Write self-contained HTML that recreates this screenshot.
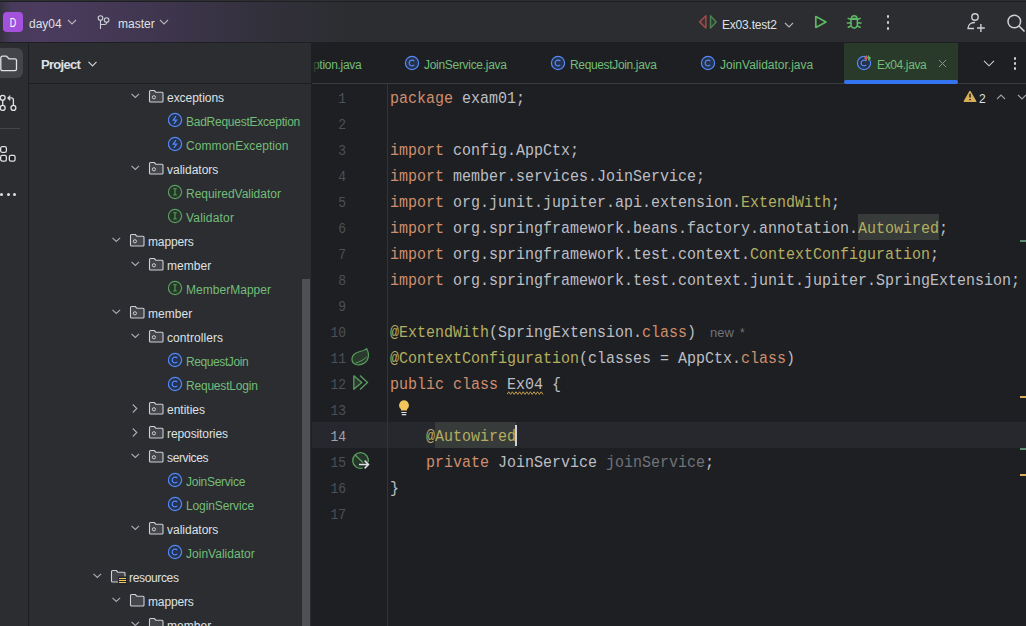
<!DOCTYPE html>
<html><head><meta charset="utf-8">
<style>
*{margin:0;padding:0;box-sizing:border-box}
html,body{width:1026px;height:626px;overflow:hidden;background:#1E1F22}
body{position:relative;font-family:"Liberation Sans",sans-serif;color:#DFE1E5}
.a{position:absolute}
#top{left:0;top:0;width:1026px;height:2px;background:linear-gradient(180deg,#2D2F33 0,#2D2F33 1px,#1E1F22 1px,#1E1F22 2px)}
#tb{left:0;top:2px;width:1026px;height:40px;background:#2B2D30}
#tbg{left:0;top:2px;width:1026px;height:40px;background:linear-gradient(90deg,rgba(120,80,160,0.12) 0px,rgba(120,80,160,0.38) 11px,rgba(120,80,160,0.42) 40px,rgba(112,76,152,0.32) 140px,rgba(95,68,128,0.15) 260px,rgba(43,45,48,0) 350px)}
#tbline{left:0;top:42px;width:1026px;height:1px;background:#1E1F22}
#strip{left:0;top:43px;width:28px;height:583px;background:#2B2D30}
#stripb{left:28px;top:43px;width:1px;height:583px;background:#1E1F22}
#proj{left:29px;top:43px;width:282px;height:583px;background:#2B2D30}
#projb{left:29px;top:83px;width:282px;height:1px;background:#1E1F22}
#projr{left:311px;top:43px;width:1px;height:583px;background:#1E1F22}
.ui{font-size:12px;color:#DFE1E5;white-space:pre;line-height:16px}
.t{position:absolute;font-size:12px;white-space:pre;line-height:16px;color:#DFE1E5}
.g{color:#73BD79}
.code{position:absolute;left:390px;font-family:"Liberation Mono",monospace;font-size:15px;line-height:26px;height:26px;white-space:pre;color:#BCBEC4;transform:translateY(3px) scaleY(1.1)}
.ln{position:absolute;left:312px;width:34px;text-align:right;font-family:"Liberation Mono",monospace;font-size:13px;line-height:26px;height:26px;color:#4B5059;transform:translateY(2.5px) scaleY(1.1)}
.k{color:#CF8E6D}
.an{color:#B3AE60}
.gr{color:#6F737A}
</style></head><body>
<div class="a" id="top"></div>
<div class="a" id="tb"></div>
<div class="a" id="tbg"></div>
<div class="a" id="tbline"></div>

<!-- title bar content -->
<div class="a" style="left:3px;top:12px;width:20px;height:20px;border-radius:4px;background:#A451DE"></div>
<div class="t" style="left:3px;top:15px;width:20px;text-align:center;font-size:12px;color:#fff;transform:scaleX(0.75)">D</div>
<div class="t" style="left:29px;top:16px;font-size:12px">day04</div>
<svg class="a" style="left:67px;top:19px" width="10" height="6" viewBox="0 0 10 6"><path d="M1 1L5 5L9 1" stroke="#B4B6BC" stroke-width="1.1" fill="none"/></svg>
<svg class="a" style="left:96px;top:14px" width="14" height="18" viewBox="0 0 14 18"><circle cx="4.5" cy="4" r="2.3" stroke="#CED0D6" stroke-width="1.1" fill="none"/><circle cx="10.6" cy="6" r="2.3" stroke="#CED0D6" stroke-width="1.1" fill="none"/><path d="M4.5 6.3V15M10.6 8.3V9C10.6 10.5 10 10.5 8.5 10.5H4.5" stroke="#CED0D6" stroke-width="1.1" fill="none"/></svg>
<div class="t" style="left:118px;top:16px">master</div>
<svg class="a" style="left:159px;top:19px" width="10" height="6" viewBox="0 0 10 6"><path d="M1 1L5 5L9 1" stroke="#B4B6BC" stroke-width="1.1" fill="none"/></svg>

<!-- right toolbar -->
<svg class="a" style="left:694px;top:10px" width="26" height="24" viewBox="0 0 26 24"><path d="M5.6 11.9L11.9 5.8V18Z" fill="#3D2F31" stroke="#9E4C4C" stroke-width="1.5" stroke-linejoin="round"/><path d="M16.5 5.8L22.2 11.9L16.5 18Z" fill="#2F3D31" stroke="#4C8050" stroke-width="1.5" stroke-linejoin="round"/></svg>
<div class="t" style="left:722px;top:17px;letter-spacing:-0.2px">Ex03.test2</div>
<svg class="a" style="left:784px;top:22px" width="10" height="6" viewBox="0 0 10 6"><path d="M1 1L5 5L9 1" stroke="#B4B6BC" stroke-width="1.1" fill="none"/></svg>
<svg class="a" style="left:806px;top:10px" width="26" height="24" viewBox="0 0 26 24"><path d="M9.8 6.5L20 11.9L9.8 17.4Z" fill="none" stroke="#5FB865" stroke-width="1.7" stroke-linejoin="round"/></svg>
<svg class="a" style="left:845px;top:12px" width="18" height="18" viewBox="0 0 18 18"><path d="M6.4 6.6A2.8 2.8 0 0 1 12 6.6Z" fill="none" stroke="#5FB865" stroke-width="1.5" stroke-linejoin="round"/><path d="M6 7.2H12.4V12.6A3.2 3.5 0 0 1 6 12.6Z" fill="none" stroke="#5FB865" stroke-width="1.5"/><path d="M3.2 6.4L6 7.5M2.4 11H6M3.2 15.3L6 14M15.2 6.4L12.4 7.5M16 11H12.4M15.2 15.3L12.4 14" stroke="#5FB865" stroke-width="1.5" stroke-linecap="round"/></svg>
<div class="a" style="left:886.5px;top:15px;width:2.8px;height:2.8px;border-radius:2px;background:#CED0D6"></div>
<div class="a" style="left:886.5px;top:21px;width:2.8px;height:2.8px;border-radius:2px;background:#CED0D6"></div>
<div class="a" style="left:886.5px;top:27px;width:2.8px;height:2.8px;border-radius:2px;background:#CED0D6"></div>
<svg class="a" style="left:966px;top:12px" width="20" height="20" viewBox="0 0 20 20"><circle cx="9" cy="5" r="3.2" fill="none" stroke="#CED0D6" stroke-width="1.4"/><path d="M2 16.5C2 12 6 10.5 9 10.5" fill="none" stroke="#CED0D6" stroke-width="1.4"/><path d="M1.5 16.5H8M14.9 12V20M11 16H18.8" stroke="#CED0D6" stroke-width="1.4"/></svg>
<svg class="a" style="left:1006.7px;top:13.5px" width="20" height="19" viewBox="0 0 20 19"><circle cx="7.3" cy="7.5" r="6.3" fill="none" stroke="#CED0D6" stroke-width="1.5"/><path d="M12 12L17.5 17.5" stroke="#CED0D6" stroke-width="1.6"/></svg>

<!-- left strip -->
<div class="a" id="strip"></div>
<div class="a" id="stripb"></div>
<div class="a" style="left:-6px;top:48px;width:29px;height:30px;border-radius:6px;background:#43454A"></div>
<svg class="a" style="left:0;top:55px" width="18" height="17" viewBox="0 0 18 17"><path d="M0.8 3Q0.8 1.2 2.5 1.2H6.5L9 3.8H15Q16.5 3.8 16.5 5.3V14Q16.5 15.6 15 15.6H2.5Q0.8 15.6 0.8 14Z" fill="none" stroke="#DFE1E5" stroke-width="1.3" stroke-linejoin="round"/></svg>
<svg class="a" style="left:0;top:88px" width="18" height="24" viewBox="0 0 18 24"><circle cx="2.7" cy="9.8" r="2.45" fill="none" stroke="#DFE1E5" stroke-width="1.3"/><circle cx="2.7" cy="19.9" r="2.45" fill="none" stroke="#DFE1E5" stroke-width="1.3"/><circle cx="13.4" cy="19.9" r="2.45" fill="none" stroke="#DFE1E5" stroke-width="1.3"/><path d="M2.7 12.3V17.4M13.4 17.4V12Q13.4 9.9 11.3 9.9H8.2M10.3 7.6L8 9.9L10.3 12.2" fill="none" stroke="#DFE1E5" stroke-width="1.3"/></svg>
<div class="a" style="left:0;top:128px;width:20px;height:1px;background:#43454A"></div>
<svg class="a" style="left:0;top:145px" width="18" height="18" viewBox="0 0 18 18"><rect x="0.65" y="1.65" width="5.7" height="5.7" rx="1.6" fill="#1F2023" stroke="#DFE1E5" stroke-width="1.3"/><rect x="0.65" y="10.35" width="5.7" height="5.7" rx="1.6" fill="#1F2023" stroke="#DFE1E5" stroke-width="1.3"/><rect x="9.35" y="10.35" width="5.7" height="5.7" rx="1.6" fill="#1F2023" stroke="#DFE1E5" stroke-width="1.3"/></svg>
<div class="a" style="left:0;top:192.5px;width:3px;height:3px;border-radius:2px;background:#DFE1E5"></div>
<div class="a" style="left:6.5px;top:192.5px;width:3px;height:3px;border-radius:2px;background:#DFE1E5"></div>
<div class="a" style="left:13px;top:192.5px;width:3px;height:3px;border-radius:2px;background:#DFE1E5"></div>

<!-- project panel -->
<div class="a" id="proj"></div>
<div class="a" id="projb"></div>
<div class="a" id="projr"></div>
<div class="t" style="left:41px;top:57px;font-size:13px;font-weight:bold;letter-spacing:-0.7px">Project</div>
<svg class="a" style="left:88px;top:61px" width="9" height="6" viewBox="0 0 9 6"><path d="M0.5 0.8L4.5 4.8L8.5 0.8" stroke="#CED0D6" stroke-width="1.2" fill="none"/></svg>
<svg class="a" style="left:131px;top:93px" width="9" height="6" viewBox="0 0 9 6"><path d="M0.5 0.8L4.3 4.5L8.1 0.8" stroke="#A8ADBD" stroke-width="1.1" fill="none"/></svg>
<svg class="a" style="left:148px;top:89px" width="17" height="16" viewBox="0 0 17 16"><path d="M1.5 2.5Q1.5 1.5 2.5 1.5H6.3L8 3.3H14Q15 3.3 15 4.3V12Q15 13 14 13H2.5Q1.5 13 1.5 12Z" fill="#43454A" stroke="#CED0D6" stroke-width="1.1" stroke-linejoin="round"/><circle cx="5.9" cy="8.3" r="1.6" fill="none" stroke="#CED0D6" stroke-width="1"/></svg>
<div class="t" style="left:167px;top:90px;color:#DFE1E5;letter-spacing:-0.038px">exceptions</div>
<svg class="a" style="left:167px;top:112px" width="16" height="16" viewBox="0 0 16 16"><circle cx="8" cy="8" r="6.6" fill="#25324D" stroke="#548AF7" stroke-width="1.2"/><path d="M9 4.2L6.2 8.2H9.6L6.9 11.8" fill="none" stroke="#548AF7" stroke-width="1.2"/></svg>
<div class="t" style="left:186px;top:114px;color:#73BD79;letter-spacing:-0.250px">BadRequestException</div>
<svg class="a" style="left:167px;top:136px" width="16" height="16" viewBox="0 0 16 16"><circle cx="8" cy="8" r="6.6" fill="#25324D" stroke="#548AF7" stroke-width="1.2"/><path d="M9 4.2L6.2 8.2H9.6L6.9 11.8" fill="none" stroke="#548AF7" stroke-width="1.2"/></svg>
<div class="t" style="left:186px;top:138px;color:#73BD79;letter-spacing:0.081px">CommonException</div>
<svg class="a" style="left:131px;top:165px" width="9" height="6" viewBox="0 0 9 6"><path d="M0.5 0.8L4.3 4.5L8.1 0.8" stroke="#A8ADBD" stroke-width="1.1" fill="none"/></svg>
<svg class="a" style="left:148px;top:161px" width="17" height="16" viewBox="0 0 17 16"><path d="M1.5 2.5Q1.5 1.5 2.5 1.5H6.3L8 3.3H14Q15 3.3 15 4.3V12Q15 13 14 13H2.5Q1.5 13 1.5 12Z" fill="#43454A" stroke="#CED0D6" stroke-width="1.1" stroke-linejoin="round"/><circle cx="5.9" cy="8.3" r="1.6" fill="none" stroke="#CED0D6" stroke-width="1"/></svg>
<div class="t" style="left:167px;top:162px;color:#DFE1E5;letter-spacing:-0.006px">validators</div>
<svg class="a" style="left:167px;top:184px" width="16" height="16" viewBox="0 0 16 16"><circle cx="8" cy="8" r="6.6" fill="#253627" stroke="#5AA062" stroke-width="1.2"/><path d="M6.2 4.6H9.8M6.2 10.9H9.8M8 4.6V10.9" fill="none" stroke="#4F8A56" stroke-width="1.4"/></svg>
<div class="t" style="left:186px;top:186px;color:#73BD79;letter-spacing:-0.016px">RequiredValidator</div>
<svg class="a" style="left:167px;top:208px" width="16" height="16" viewBox="0 0 16 16"><circle cx="8" cy="8" r="6.6" fill="#253627" stroke="#5AA062" stroke-width="1.2"/><path d="M6.2 4.6H9.8M6.2 10.9H9.8M8 4.6V10.9" fill="none" stroke="#4F8A56" stroke-width="1.4"/></svg>
<div class="t" style="left:186px;top:210px;color:#73BD79;letter-spacing:0.180px">Validator</div>
<svg class="a" style="left:112px;top:237px" width="9" height="6" viewBox="0 0 9 6"><path d="M0.5 0.8L4.3 4.5L8.1 0.8" stroke="#A8ADBD" stroke-width="1.1" fill="none"/></svg>
<svg class="a" style="left:129px;top:233px" width="17" height="16" viewBox="0 0 17 16"><path d="M1.5 2.5Q1.5 1.5 2.5 1.5H6.3L8 3.3H14Q15 3.3 15 4.3V12Q15 13 14 13H2.5Q1.5 13 1.5 12Z" fill="#43454A" stroke="#CED0D6" stroke-width="1.1" stroke-linejoin="round"/><circle cx="5.9" cy="8.3" r="1.6" fill="none" stroke="#CED0D6" stroke-width="1"/></svg>
<div class="t" style="left:148px;top:234px;color:#DFE1E5;letter-spacing:-0.141px">mappers</div>
<svg class="a" style="left:131px;top:261px" width="9" height="6" viewBox="0 0 9 6"><path d="M0.5 0.8L4.3 4.5L8.1 0.8" stroke="#A8ADBD" stroke-width="1.1" fill="none"/></svg>
<svg class="a" style="left:148px;top:257px" width="17" height="16" viewBox="0 0 17 16"><path d="M1.5 2.5Q1.5 1.5 2.5 1.5H6.3L8 3.3H14Q15 3.3 15 4.3V12Q15 13 14 13H2.5Q1.5 13 1.5 12Z" fill="#43454A" stroke="#CED0D6" stroke-width="1.1" stroke-linejoin="round"/><circle cx="5.9" cy="8.3" r="1.6" fill="none" stroke="#CED0D6" stroke-width="1"/></svg>
<div class="t" style="left:167px;top:258px;color:#DFE1E5;letter-spacing:0.063px">member</div>
<svg class="a" style="left:167px;top:280px" width="16" height="16" viewBox="0 0 16 16"><circle cx="8" cy="8" r="6.6" fill="#253627" stroke="#5AA062" stroke-width="1.2"/><path d="M6.2 4.6H9.8M6.2 10.9H9.8M8 4.6V10.9" fill="none" stroke="#4F8A56" stroke-width="1.4"/></svg>
<div class="t" style="left:186px;top:282px;color:#73BD79;letter-spacing:0.025px">MemberMapper</div>
<svg class="a" style="left:112px;top:309px" width="9" height="6" viewBox="0 0 9 6"><path d="M0.5 0.8L4.3 4.5L8.1 0.8" stroke="#A8ADBD" stroke-width="1.1" fill="none"/></svg>
<svg class="a" style="left:129px;top:305px" width="17" height="16" viewBox="0 0 17 16"><path d="M1.5 2.5Q1.5 1.5 2.5 1.5H6.3L8 3.3H14Q15 3.3 15 4.3V12Q15 13 14 13H2.5Q1.5 13 1.5 12Z" fill="#43454A" stroke="#CED0D6" stroke-width="1.1" stroke-linejoin="round"/><circle cx="5.9" cy="8.3" r="1.6" fill="none" stroke="#CED0D6" stroke-width="1"/></svg>
<div class="t" style="left:148px;top:306px;color:#DFE1E5;letter-spacing:0.063px">member</div>
<svg class="a" style="left:131px;top:333px" width="9" height="6" viewBox="0 0 9 6"><path d="M0.5 0.8L4.3 4.5L8.1 0.8" stroke="#A8ADBD" stroke-width="1.1" fill="none"/></svg>
<svg class="a" style="left:148px;top:329px" width="17" height="16" viewBox="0 0 17 16"><path d="M1.5 2.5Q1.5 1.5 2.5 1.5H6.3L8 3.3H14Q15 3.3 15 4.3V12Q15 13 14 13H2.5Q1.5 13 1.5 12Z" fill="#43454A" stroke="#CED0D6" stroke-width="1.1" stroke-linejoin="round"/><circle cx="5.9" cy="8.3" r="1.6" fill="none" stroke="#CED0D6" stroke-width="1"/></svg>
<div class="t" style="left:167px;top:330px;color:#DFE1E5;letter-spacing:0.076px">controllers</div>
<svg class="a" style="left:167px;top:352px" width="16" height="16" viewBox="0 0 16 16"><circle cx="8" cy="8" r="6.6" fill="#25324D" stroke="#548AF7" stroke-width="1.2"/><path d="M10.25 6.1A2.9 2.9 0 1 0 10.25 9.9" fill="none" stroke="#548AF7" stroke-width="1.25"/></svg>
<div class="t" style="left:186px;top:354px;color:#73BD79;letter-spacing:-0.411px">RequestJoin</div>
<svg class="a" style="left:167px;top:376px" width="16" height="16" viewBox="0 0 16 16"><circle cx="8" cy="8" r="6.6" fill="#25324D" stroke="#548AF7" stroke-width="1.2"/><path d="M10.25 6.1A2.9 2.9 0 1 0 10.25 9.9" fill="none" stroke="#548AF7" stroke-width="1.25"/></svg>
<div class="t" style="left:186px;top:378px;color:#73BD79;letter-spacing:-0.205px">RequestLogin</div>
<svg class="a" style="left:132px;top:404px" width="6" height="9" viewBox="0 0 6 9"><path d="M0.8 0.5L4.8 4.5L0.8 8.5" stroke="#A8ADBD" stroke-width="1.1" fill="none"/></svg>
<svg class="a" style="left:148px;top:401px" width="17" height="16" viewBox="0 0 17 16"><path d="M1.5 2.5Q1.5 1.5 2.5 1.5H6.3L8 3.3H14Q15 3.3 15 4.3V12Q15 13 14 13H2.5Q1.5 13 1.5 12Z" fill="#43454A" stroke="#CED0D6" stroke-width="1.1" stroke-linejoin="round"/><circle cx="5.9" cy="8.3" r="1.6" fill="none" stroke="#CED0D6" stroke-width="1"/></svg>
<div class="t" style="left:167px;top:402px;color:#DFE1E5;letter-spacing:-0.004px">entities</div>
<svg class="a" style="left:132px;top:428px" width="6" height="9" viewBox="0 0 6 9"><path d="M0.8 0.5L4.8 4.5L0.8 8.5" stroke="#A8ADBD" stroke-width="1.1" fill="none"/></svg>
<svg class="a" style="left:148px;top:425px" width="17" height="16" viewBox="0 0 17 16"><path d="M1.5 2.5Q1.5 1.5 2.5 1.5H6.3L8 3.3H14Q15 3.3 15 4.3V12Q15 13 14 13H2.5Q1.5 13 1.5 12Z" fill="#43454A" stroke="#CED0D6" stroke-width="1.1" stroke-linejoin="round"/><circle cx="5.9" cy="8.3" r="1.6" fill="none" stroke="#CED0D6" stroke-width="1"/></svg>
<div class="t" style="left:167px;top:426px;color:#DFE1E5;letter-spacing:-0.094px">repositories</div>
<svg class="a" style="left:131px;top:453px" width="9" height="6" viewBox="0 0 9 6"><path d="M0.5 0.8L4.3 4.5L8.1 0.8" stroke="#A8ADBD" stroke-width="1.1" fill="none"/></svg>
<svg class="a" style="left:148px;top:449px" width="17" height="16" viewBox="0 0 17 16"><path d="M1.5 2.5Q1.5 1.5 2.5 1.5H6.3L8 3.3H14Q15 3.3 15 4.3V12Q15 13 14 13H2.5Q1.5 13 1.5 12Z" fill="#43454A" stroke="#CED0D6" stroke-width="1.1" stroke-linejoin="round"/><circle cx="5.9" cy="8.3" r="1.6" fill="none" stroke="#CED0D6" stroke-width="1"/></svg>
<div class="t" style="left:167px;top:450px;color:#DFE1E5;letter-spacing:-0.365px">services</div>
<svg class="a" style="left:167px;top:472px" width="16" height="16" viewBox="0 0 16 16"><circle cx="8" cy="8" r="6.6" fill="#25324D" stroke="#548AF7" stroke-width="1.2"/><path d="M10.25 6.1A2.9 2.9 0 1 0 10.25 9.9" fill="none" stroke="#548AF7" stroke-width="1.25"/></svg>
<div class="t" style="left:186px;top:474px;color:#73BD79;letter-spacing:-0.266px">JoinService</div>
<svg class="a" style="left:167px;top:496px" width="16" height="16" viewBox="0 0 16 16"><circle cx="8" cy="8" r="6.6" fill="#25324D" stroke="#548AF7" stroke-width="1.2"/><path d="M10.25 6.1A2.9 2.9 0 1 0 10.25 9.9" fill="none" stroke="#548AF7" stroke-width="1.25"/></svg>
<div class="t" style="left:186px;top:498px;color:#73BD79;letter-spacing:-0.115px">LoginService</div>
<svg class="a" style="left:131px;top:525px" width="9" height="6" viewBox="0 0 9 6"><path d="M0.5 0.8L4.3 4.5L8.1 0.8" stroke="#A8ADBD" stroke-width="1.1" fill="none"/></svg>
<svg class="a" style="left:148px;top:521px" width="17" height="16" viewBox="0 0 17 16"><path d="M1.5 2.5Q1.5 1.5 2.5 1.5H6.3L8 3.3H14Q15 3.3 15 4.3V12Q15 13 14 13H2.5Q1.5 13 1.5 12Z" fill="#43454A" stroke="#CED0D6" stroke-width="1.1" stroke-linejoin="round"/><circle cx="5.9" cy="8.3" r="1.6" fill="none" stroke="#CED0D6" stroke-width="1"/></svg>
<div class="t" style="left:167px;top:522px;color:#DFE1E5;letter-spacing:-0.006px">validators</div>
<svg class="a" style="left:167px;top:544px" width="16" height="16" viewBox="0 0 16 16"><circle cx="8" cy="8" r="6.6" fill="#25324D" stroke="#548AF7" stroke-width="1.2"/><path d="M10.25 6.1A2.9 2.9 0 1 0 10.25 9.9" fill="none" stroke="#548AF7" stroke-width="1.25"/></svg>
<div class="t" style="left:186px;top:546px;color:#73BD79;letter-spacing:0.017px">JoinValidator</div>
<svg class="a" style="left:93px;top:573px" width="9" height="6" viewBox="0 0 9 6"><path d="M0.5 0.8L4.3 4.5L8.1 0.8" stroke="#A8ADBD" stroke-width="1.1" fill="none"/></svg>
<svg class="a" style="left:110px;top:569px" width="17" height="16" viewBox="0 0 17 16"><path d="M1.5 2.5Q1.5 1.5 2.5 1.5H6.3L8 3.3H14Q15 3.3 15 4.3V12Q15 13 14 13H2.5Q1.5 13 1.5 12Z" fill="#43454A" stroke="#CED0D6" stroke-width="1.1" stroke-linejoin="round"/><rect x="8" y="7.5" width="9" height="8.5" fill="#25272A"/><path d="M9 9.5H16M9 11.5H16M9 13.5H16" stroke="#F0C45E" stroke-width="1"/></svg>
<div class="t" style="left:129px;top:570px;color:#DFE1E5;letter-spacing:-0.343px">resources</div>
<svg class="a" style="left:112px;top:597px" width="9" height="6" viewBox="0 0 9 6"><path d="M0.5 0.8L4.3 4.5L8.1 0.8" stroke="#A8ADBD" stroke-width="1.1" fill="none"/></svg>
<svg class="a" style="left:129px;top:593px" width="17" height="16" viewBox="0 0 17 16"><path d="M1.5 2.5Q1.5 1.5 2.5 1.5H6.3L8 3.3H14Q15 3.3 15 4.3V12Q15 13 14 13H2.5Q1.5 13 1.5 12Z" fill="#43454A" stroke="#CED0D6" stroke-width="1.1" stroke-linejoin="round"/></svg>
<div class="t" style="left:148px;top:594px;color:#DFE1E5;letter-spacing:-0.141px">mappers</div>
<svg class="a" style="left:131px;top:621px" width="9" height="6" viewBox="0 0 9 6"><path d="M0.5 0.8L4.3 4.5L8.1 0.8" stroke="#A8ADBD" stroke-width="1.1" fill="none"/></svg>
<svg class="a" style="left:148px;top:617px" width="17" height="16" viewBox="0 0 17 16"><path d="M1.5 2.5Q1.5 1.5 2.5 1.5H6.3L8 3.3H14Q15 3.3 15 4.3V12Q15 13 14 13H2.5Q1.5 13 1.5 12Z" fill="#43454A" stroke="#CED0D6" stroke-width="1.1" stroke-linejoin="round"/></svg>
<div class="t" style="left:167px;top:618px;color:#DFE1E5;letter-spacing:0.063px">member</div>
<div class="a" style="left:302px;top:279px;width:8px;height:347px;background:#4E5055"></div>

<!-- editor -->
<div class="a" style="left:312px;top:43px;width:714px;height:40px;background:#1E1F22"></div>
<div class="a" style="left:312px;top:83px;width:714px;height:1px;background:#393B40"></div>
<div class="a" style="left:844px;top:43px;width:114px;height:40px;background:#293A2B"></div>
<div class="a" style="left:844px;top:80px;width:114px;height:4px;border-radius:2px;background:#3574F0"></div>
<div class="t" style="left:313px;top:57px;color:#73BD79;letter-spacing:-0.3px">ption.java</div>
<div class="t" style="left:424px;top:57px;color:#73BD79;letter-spacing:-0.3px">JoinService.java</div>
<svg class="a" style="left:404px;top:55px" width="16" height="16" viewBox="0 0 16 16"><circle cx="8" cy="8" r="6.6" fill="#25324D" stroke="#548AF7" stroke-width="1.2"/><path d="M10.25 6.1A2.9 2.9 0 1 0 10.25 9.9" fill="none" stroke="#548AF7" stroke-width="1.25"/></svg>
<div class="t" style="left:570px;top:57px;color:#73BD79;letter-spacing:-0.35px">RequestJoin.java</div>
<svg class="a" style="left:550px;top:55px" width="16" height="16" viewBox="0 0 16 16"><circle cx="8" cy="8" r="6.6" fill="#25324D" stroke="#548AF7" stroke-width="1.2"/><path d="M10.25 6.1A2.9 2.9 0 1 0 10.25 9.9" fill="none" stroke="#548AF7" stroke-width="1.25"/></svg>
<div class="t" style="left:720px;top:57px;color:#73BD79;letter-spacing:0.0px">JoinValidator.java</div>
<svg class="a" style="left:700px;top:55px" width="16" height="16" viewBox="0 0 16 16"><circle cx="8" cy="8" r="6.6" fill="#25324D" stroke="#548AF7" stroke-width="1.2"/><path d="M10.25 6.1A2.9 2.9 0 1 0 10.25 9.9" fill="none" stroke="#548AF7" stroke-width="1.25"/></svg>
<div class="t" style="left:877px;top:57px;color:#73BD79;letter-spacing:-0.37px">Ex04.java</div>
<svg class="a" style="left:856px;top:55px" width="16" height="16" viewBox="0 0 16 16"><circle cx="8" cy="8" r="6.6" fill="#25324D" stroke="#548AF7" stroke-width="1.2"/><path d="M10.25 6.1A2.9 2.9 0 1 0 10.25 9.9" fill="none" stroke="#548AF7" stroke-width="1.25"/></svg>
<div class="a" style="left:311px;top:43px;width:1px;height:40px;background:#1E1F22"></div>
<div class="a" style="left:312px;top:50px;width:9px;height:26px;background:linear-gradient(90deg,rgba(30,31,34,1),rgba(30,31,34,0.6) 50%,rgba(30,31,34,0))"></div>
<svg class="a" style="left:863px;top:54px" width="10" height="8" viewBox="0 0 10 8"><path d="M1 4L4 1V7Z" fill="#DB5C5C"/><path d="M5 1L8 4L5 7Z" fill="#5FB865"/></svg>
<svg class="a" style="left:938px;top:58.5px" width="9" height="9" viewBox="0 0 9 9"><path d="M1 1L8 8M8 1L1 8" stroke="#8C8F96" stroke-width="1"/></svg>
<svg class="a" style="left:983px;top:60px" width="12" height="7" viewBox="0 0 12 7"><path d="M1 0.8L6 5.8L11 0.8" stroke="#CED0D6" stroke-width="1.1" fill="none"/></svg>
<div class="a" style="left:1013.5px;top:57px;width:2.5px;height:2.5px;border-radius:2px;background:#CED0D6"></div>
<div class="a" style="left:1013.5px;top:62px;width:2.5px;height:2.5px;border-radius:2px;background:#CED0D6"></div>
<div class="a" style="left:1013.5px;top:67px;width:2.5px;height:2.5px;border-radius:2px;background:#CED0D6"></div>
<div class="a" style="left:312px;top:422px;width:714px;height:26px;background:#26282E"></div>
<div class="a" style="left:387px;top:84px;width:1px;height:542px;background:#313438"></div>
<div class="a" style="left:858px;top:214px;width:81px;height:26px;background:#373B39"></div>
<div class="a" style="left:435px;top:422px;width:81px;height:26px;background:#373B39"></div>
<div class="ln" style="top:84px">1</div>
<div class="code" style="top:84px"><span class="k">package</span> exam01;</div>
<div class="ln" style="top:110px">2</div>
<div class="ln" style="top:136px">3</div>
<div class="code" style="top:136px"><span class="k">import</span> config.AppCtx;</div>
<div class="ln" style="top:162px">4</div>
<div class="code" style="top:162px"><span class="k">import</span> member.services.JoinService;</div>
<div class="ln" style="top:188px">5</div>
<div class="code" style="top:188px"><span class="k">import</span> org.junit.jupiter.api.extension.<span class="an">ExtendWith</span>;</div>
<div class="ln" style="top:214px">6</div>
<div class="code" style="top:214px"><span class="k">import</span> org.springframework.beans.factory.annotation.<span class="an">Autowired</span>;</div>
<div class="ln" style="top:240px">7</div>
<div class="code" style="top:240px"><span class="k">import</span> org.springframework.test.context.<span class="an">ContextConfiguration</span>;</div>
<div class="ln" style="top:266px">8</div>
<div class="code" style="top:266px"><span class="k">import</span> org.springframework.test.context.junit.jupiter.SpringExtension;</div>
<div class="ln" style="top:292px">9</div>
<div class="ln" style="top:318px">10</div>
<div class="code" style="top:318px"><span class="an">@ExtendWith</span>(SpringExtension.<span class="k">class</span>)</div>
<div class="ln" style="top:344px">11</div>
<div class="code" style="top:344px"><span class="an">@ContextConfiguration</span>(classes = AppCtx.<span class="k">class</span>)</div>
<div class="ln" style="top:370px">12</div>
<div class="code" style="top:370px"><span class="k">public</span> <span class="k">class</span> Ex04 {</div>
<div class="ln" style="top:396px">13</div>
<div class="ln" style="top:422px;color:#A1A3AB">14</div>
<div class="code" style="top:422px">    <span class="an">@Autowired</span></div>
<div class="ln" style="top:448px">15</div>
<div class="code" style="top:448px">    <span class="k">private</span> JoinService <span class="gr">joinService</span>;</div>
<div class="ln" style="top:474px">16</div>
<div class="code" style="top:474px">}</div>
<div class="ln" style="top:500px">17</div>
<div class="a" style="left:515px;top:425px;width:2px;height:21px;background:#CED0D6"></div>
<div class="t" style="left:710px;top:325px;color:#6F737A;font-size:13px">new</div>
<div class="t" style="left:740px;top:325px;color:#6F737A;font-size:12px">*</div>
<svg class="a" style="left:507px;top:390.5px" width="37" height="4.5" viewBox="0 0 37 4.5"><path d="M0 3.4 L1.8 0.8 L3.6 3.4 L5.4 0.8 L7.2 3.4 L9.0 0.8 L10.8 3.4 L12.6 0.8 L14.4 3.4 L16.2 0.8 L18.0 3.4 L19.8 0.8 L21.6 3.4 L23.4 0.8 L25.2 3.4 L27.0 0.8 L28.8 3.4 L30.6 0.8 L32.4 3.4 L34.2 0.8 L36.0 3.4" fill="none" stroke="#C7A14E" stroke-width="1"/></svg>
<svg class="a" style="left:351px;top:347px" width="20" height="20" viewBox="0 0 20 20"><path d="M15.5 1.5C17.5 5 18 10 16 13.5C14 17 9 18.5 5 17.5C2 16.5 0.8 14 1 11.5C1.5 7 5 5.5 9 4.5C12 3.8 14.5 3 15.5 1.5Z" fill="#2A3B2D" stroke="#5A9E60" stroke-width="1.2" stroke-linejoin="round"/><path d="M4.5 16.2C8 15 12 13.5 15.5 10" fill="none" stroke="#5A9E60" stroke-width="1"/></svg>
<svg class="a" style="left:351px;top:373px" width="20" height="20" viewBox="0 0 20 20"><path d="M2.8 2.8L10.8 9.5L2.8 16.2Z" fill="#2A3B2D" stroke="#5A9E60" stroke-width="1.3" stroke-linejoin="round"/><path d="M9 2.5L16.5 9.5L9 16.5" fill="none" stroke="#5A9E60" stroke-width="1.3"/></svg>
<svg class="a" style="left:351px;top:451px" width="20" height="20" viewBox="0 0 20 20"><circle cx="9.5" cy="9.5" r="7.6" fill="#25352A"/><path d="M17.13 11.12A7.8 7.8 0 1 0 11.65 17.0" fill="none" stroke="#5A9E60" stroke-width="1.3"/><path d="M3.8 3.8L12 11.5" stroke="#5A9E60" stroke-width="1.3"/><path d="M8 13.5H17.5M13.6 9.6L17.5 13.5L13.6 17.4" fill="none" stroke="#DFE1E5" stroke-width="1.5"/></svg>
<svg class="a" style="left:398px;top:400px" width="12" height="17" viewBox="0 0 12 17"><path d="M6 0.3A5 5 0 0 0 3 9.2V10.6H9V9.2A5 5 0 0 0 6 0.3Z" fill="#F2C55C"/><path d="M3.3 12.5H8.6M3.8 14.6H8.2" stroke="#DFE1E5" stroke-width="1.1"/></svg>
<svg class="a" style="left:963px;top:90px" width="14" height="13" viewBox="0 0 14 13"><path d="M7 1.6L12.6 11.3H1.4Z" fill="#D9AF5A" stroke="#D9AF5A" stroke-width="1.6" stroke-linejoin="round"/><path d="M7 3.8V7.6M7 9V10.2" stroke="#1E1F22" stroke-width="1.5"/></svg>
<div class="t" style="left:979px;top:91px;color:#DFE1E5">2</div>
<svg class="a" style="left:996px;top:94px" width="10" height="6" viewBox="0 0 10 6"><path d="M1 5L5 1L9 5" stroke="#9DA0A8" stroke-width="1.1" fill="none"/></svg>
<svg class="a" style="left:1017px;top:94px" width="10" height="6" viewBox="0 0 10 6"><path d="M1 1L5 5L9 1" stroke="#9DA0A8" stroke-width="1.1" fill="none"/></svg>
<div class="a" style="left:1020px;top:240px;width:6px;height:2px;background:#5E8C73"></div>
<div class="a" style="left:1020px;top:396px;width:6px;height:2px;background:#D9AF5A"></div>
<div class="a" style="left:1020px;top:448px;width:6px;height:2px;background:#5E8C73"></div>
<div class="a" style="left:1020px;top:474px;width:6px;height:2px;background:#D9AF5A"></div>

</body></html>
